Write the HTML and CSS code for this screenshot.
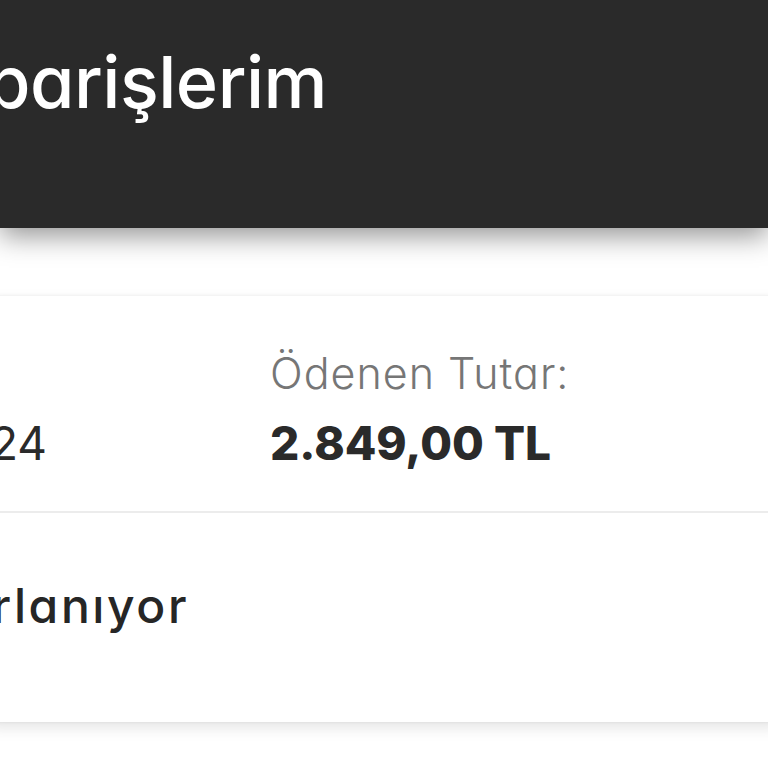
FILE: index.html
```html
<!DOCTYPE html>
<html lang="tr">
<head>
<meta charset="utf-8">
<title>Siparişlerim</title>
<link rel="stylesheet" href="styles.css">
</head>
<body>
<header class="appbar">
  <h1 class="appbar-title">parişlerim</h1>
</header>
<main class="page">
  <section class="order-card">
    <div class="order-summary">
      <div class="field field-date">
        <span class="field-label">&nbsp;</span>
        <span class="field-value">24</span>
      </div>
      <div class="field field-amount">
        <span class="field-label">Ödenen Tutar:</span>
        <span class="field-value field-value-strong">2.849,00 TL</span>
      </div>
    </div>
    <div class="order-status">
      <span class="status-text">rlanıyor</span>
    </div>
  </section>
</main>
</body>
</html>
```

FILE: styles.css
```css
* { box-sizing: border-box; }

html, body {
  margin: 0;
  padding: 0;
  width: 768px;
  height: 768px;
  overflow: hidden;
  background: #ffffff;
  font-family: "Inter", "Open Sans", "DejaVu Sans", sans-serif;
  font-feature-settings: "cv11" 1;
}

.appbar {
  position: relative;
  z-index: 2;
  height: 228px;
  background: #2a2a2a;
  padding-top: 38px;
  box-shadow: 0 8px 26px rgba(0, 0, 0, 0.42);
  overflow: hidden;
}

.appbar-title {
  margin: 0 0 0 -14px;
  font-size: 72px;
  line-height: 88px;
  font-weight: 500;
  color: #ffffff;
  letter-spacing: -0.5px;
  white-space: nowrap;
}

.page {
  padding-top: 68px;
}

.order-card {
  margin: 0 -12px;
  background: #ffffff;
  box-shadow: 0 0 3px rgba(0, 0, 0, 0.08), 0 6px 14px rgba(0, 0, 0, 0.1);
}

.order-summary {
  display: grid;
  grid-template-columns: 282px 1fr;
  padding: 51px 0 40px 0;
  border-bottom: 2px solid #ececec;
}

.field {
  display: flex;
  flex-direction: column;
  gap: 16px;
}

.field-date {
  padding-left: 2px;
}

.field-label {
  font-size: 43px;
  line-height: 52px;
  font-weight: 300;
  color: #767676;
  letter-spacing: 1px;
  white-space: nowrap;
}

.field-value {
  font-size: 46px;
  line-height: 56px;
  font-weight: 400;
  color: #2a2a2a;
  white-space: nowrap;
}

.field-value-strong {
  font-weight: 800;
}

.order-status {
  padding: 64px 0 87px 4px;
}

.status-text {
  display: block;
  font-size: 48px;
  line-height: 58px;
  font-weight: 500;
  color: #262626;
  letter-spacing: 2.6px;
  white-space: nowrap;
}
```
